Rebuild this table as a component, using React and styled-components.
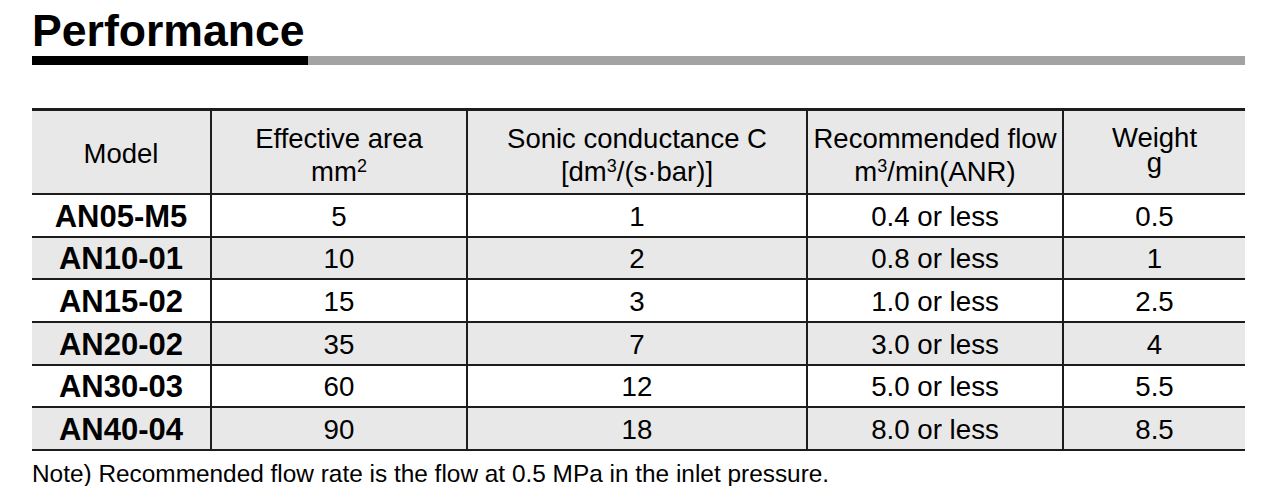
import React from "react";
import styled, { createGlobalStyle } from "styled-components";

const GlobalStyle = createGlobalStyle`
  body {
    margin: 0;
    background: #ffffff;
    color: #000000;
    font-family: "Liberation Sans", Arial, Helvetica, sans-serif;
  }
`;

const rows = [
  { model: "AN05-M5", area: "5", sonic: "1", flow: "0.4 or less", weight: "0.5" },
  { model: "AN10-01", area: "10", sonic: "2", flow: "0.8 or less", weight: "1" },
  { model: "AN15-02", area: "15", sonic: "3", flow: "1.0 or less", weight: "2.5" },
  { model: "AN20-02", area: "35", sonic: "7", flow: "3.0 or less", weight: "4" },
  { model: "AN30-03", area: "60", sonic: "12", flow: "5.0 or less", weight: "5.5" },
  { model: "AN40-04", area: "90", sonic: "18", flow: "8.0 or less", weight: "8.5" },
];

const lineColor = "#1c1c1c";
const shade = "#e8e8e8";

const Page = styled.div`
  width: 1213px;
  padding: 9px 37px 0 32px;
`;

const Title = styled.h1`
  margin: 0;
  font-size: 44.6px;
  line-height: 44px;
  font-weight: 700;
`;

const Rule = styled.div`
  display: flex;
  height: 9px;
  margin-top: 3px;
`;

const RuleHead = styled.div`
  width: 276px;
  background: #000000;
`;

const RuleTail = styled.div`
  flex: 1;
  background: #a3a3a3;
`;

const Table = styled.div`
  display: grid;
  grid-template-columns: 180px 256px 340px 256px 181px;
  grid-template-rows: 84px repeat(6, 42.67px);
  margin-top: 43px;
  border-top: 3px solid ${lineColor};
`;

const Cell = styled.div`
  display: flex;
  align-items: center;
  justify-content: center;
  box-sizing: border-box;
  border-bottom: 2px solid ${lineColor};
  border-right: ${(p) => (p.$last ? "none" : `2px solid ${lineColor}`)};
  background: ${(p) => (p.$shade ? shade : "#ffffff")};
  white-space: nowrap;
`;

const HeadCell = styled(Cell)`
  flex-direction: column;
  background: ${shade};
  font-size: 27.5px;
  line-height: ${(p) => p.$lh || "33px"};
  padding-top: ${(p) => p.$pt ?? 6}px;
  padding-bottom: ${(p) => p.$pb ?? 0}px;
  text-align: center;
`;

const DataCell = styled(Cell)`
  font-size: 27.7px;
  padding-top: 3px;
`;

const ModelCell = styled(DataCell)`
  font-size: 31px;
  font-weight: 700;
`;

const Sup = styled.span`
  font-size: 18px;
  line-height: 0;
  vertical-align: 9px;
`;

const Note = styled.p`
  margin: 11px 0 0;
  font-size: 24.4px;
  line-height: 24px;
`;

export default function App() {
  return (
    <>
      <GlobalStyle />
      <Page>
        <Title>Performance</Title>
        <Rule>
          <RuleHead />
          <RuleTail />
        </Rule>
        <Table>
          <HeadCell $pt={2}>Model</HeadCell>
          <HeadCell>
            <span>Effective area</span>
            <span>
              mm<Sup>2</Sup>
            </span>
          </HeadCell>
          <HeadCell>
            <span>Sonic conductance C</span>
            <span>
              [dm<Sup>3</Sup>/(s·bar)]
            </span>
          </HeadCell>
          <HeadCell>
            <span>Recommended flow</span>
            <span>
              m<Sup>3</Sup>/min(ANR)
            </span>
          </HeadCell>
          <HeadCell $last $lh="25px" $pt={0} $pb={4}>
            <span>Weight</span>
            <span>g</span>
          </HeadCell>
          {rows.map((r, i) => {
            const s = i % 2 === 1;
            return (
              <React.Fragment key={r.model}>
                <ModelCell $shade={s}>{r.model}</ModelCell>
                <DataCell $shade={s}>{r.area}</DataCell>
                <DataCell $shade={s}>{r.sonic}</DataCell>
                <DataCell $shade={s}>{r.flow}</DataCell>
                <DataCell $shade={s} $last>
                  {r.weight}
                </DataCell>
              </React.Fragment>
            );
          })}
        </Table>
        <Note>Note) Recommended flow rate is the flow at 0.5 MPa in the inlet pressure.</Note>
      </Page>
    </>
  );
}
